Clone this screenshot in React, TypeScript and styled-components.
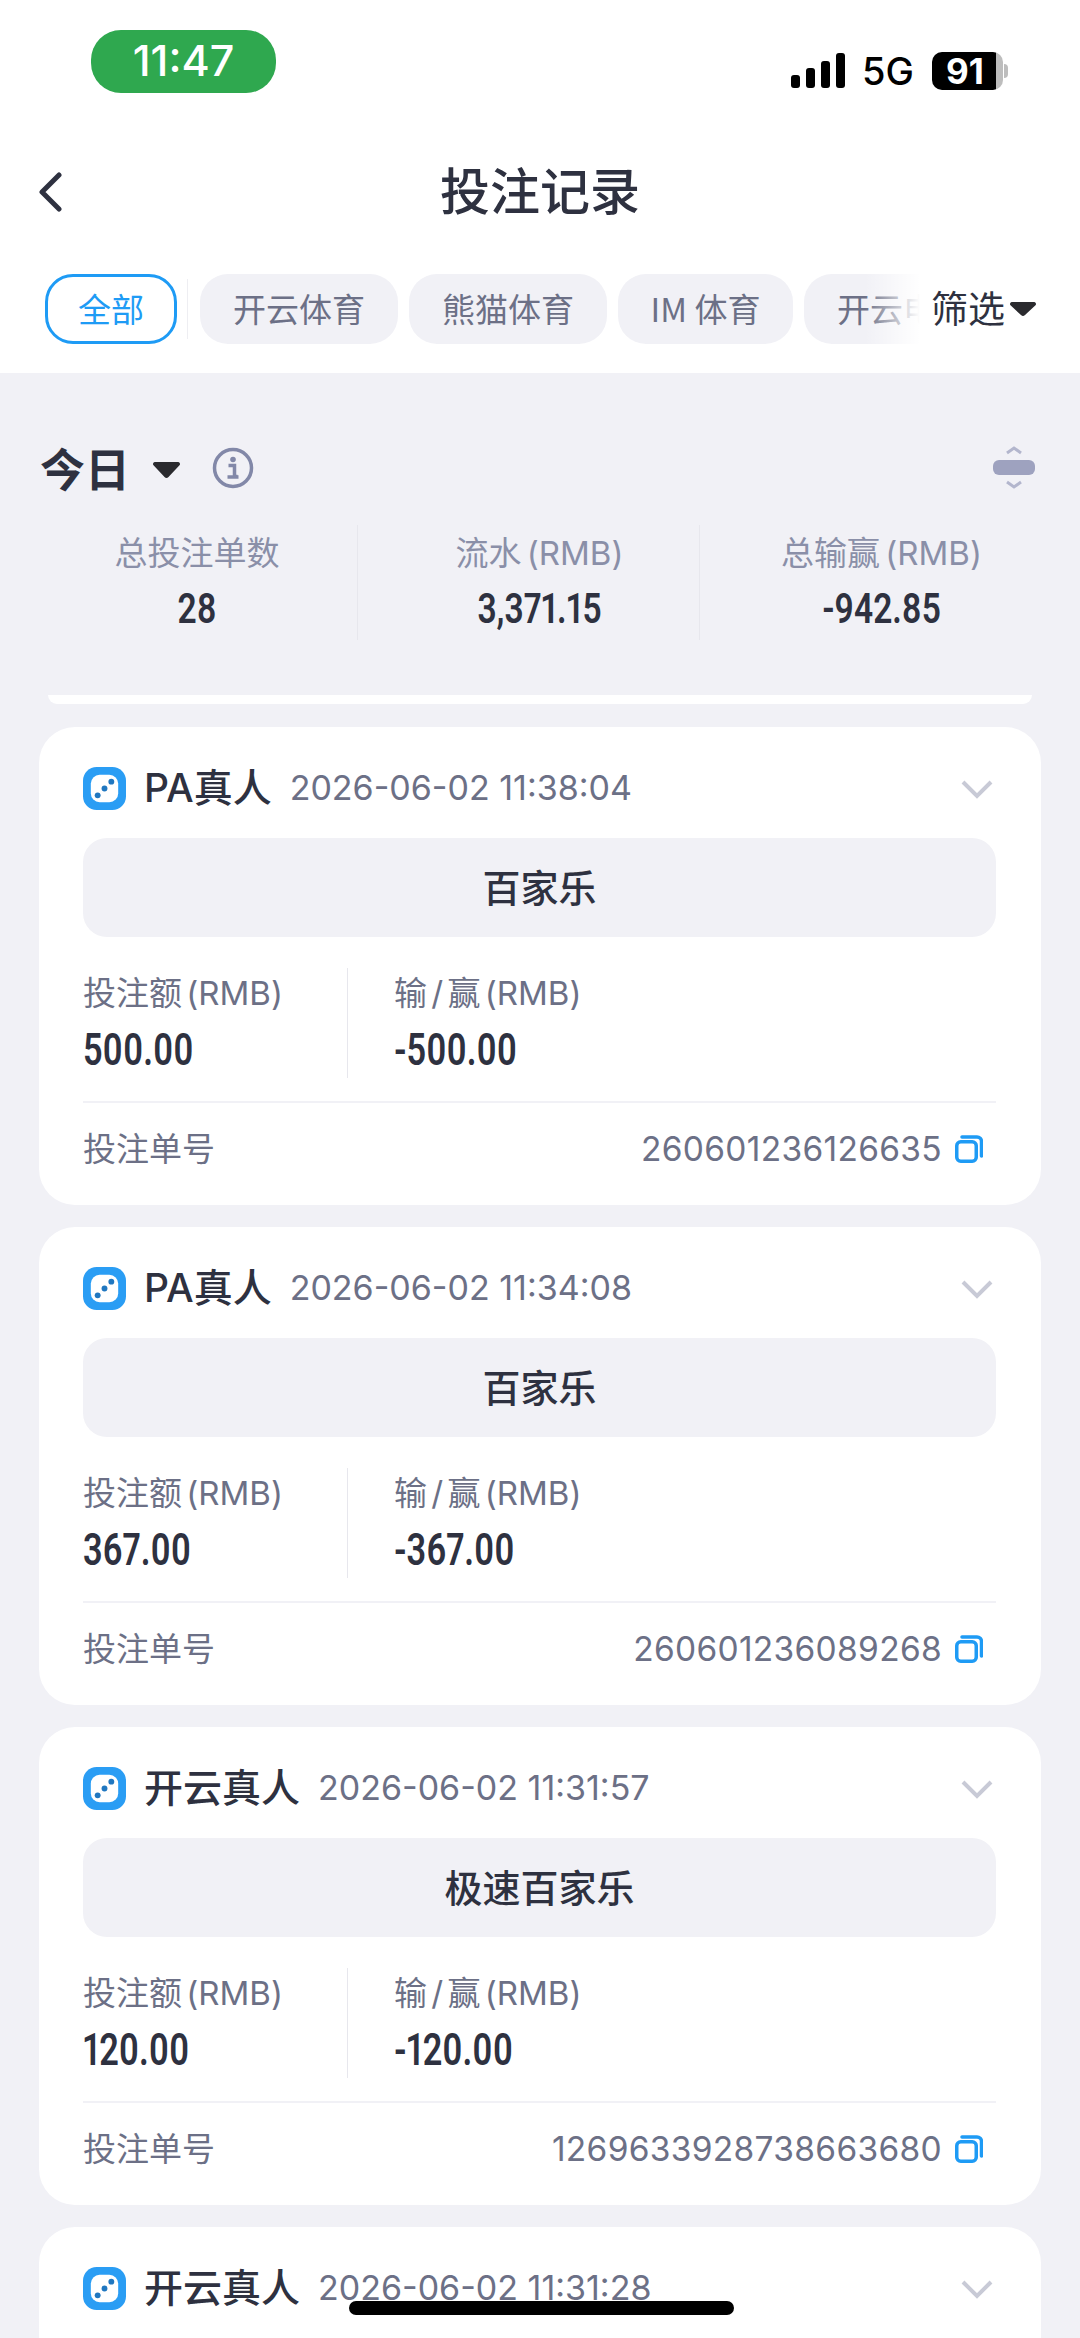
import React from 'react';
import styled, { createGlobalStyle } from 'styled-components';

const GlobalStyle = createGlobalStyle`
  html, body { margin: 0; padding: 0; background: #f1f1f6; }
  * { box-sizing: border-box; }
  body { font-family: Inter, "Noto Sans CJK SC", sans-serif; color: #2e3140; }
`;

const Page = styled.div`
  position: relative;
  width: 1080px;
  height: 2338px;
  overflow: hidden;
  background: #f1f1f6;
`;

const Header = styled.header`
  background: #fff;
  height: 373px;
`;

const StatusBar = styled.div`
  height: 120px;
  padding: 30px 72px 0 91px;
  display: flex;
  justify-content: space-between;
  align-items: flex-start;
`;

const TimePill = styled.div`
  width: 185px;
  height: 63px;
  border-radius: 30px;
  background: #2fa84f;
  color: #fff;
  font: 500 43px/61px Inter, sans-serif;
  text-align: center;
`;

const StatusRight = styled.div`
  display: flex;
  align-items: center;
  margin-top: 22px;
  height: 38px;
`;

const NetLabel = styled.span`
  font: 500 38px/38px Inter, sans-serif;
  color: #000;
  margin: 0 18px 0 15px;
`;

const Battery = styled.div`
  width: 71px;
  height: 38px;
  border-radius: 10px;
  background: linear-gradient(90deg, #000 90%, #bdbdbd 90%);
  color: #fff;
  font: 700 35px/38px Inter, sans-serif;
  text-align: center;
  padding-right: 5px;
`;

const BatteryCap = styled.div`
  width: 4px;
  height: 14px;
  margin-left: 1px;
  border-radius: 0 4px 4px 0;
  background: #bdbdbd;
`;

const NavBar = styled.div`
  position: relative;
  height: 144px;
  padding-bottom: 8px;
  display: flex;
  align-items: center;
  justify-content: center;
`;

const BackButton = styled.button`
  position: absolute;
  left: 37px;
  top: 50%;
  transform: translateY(-50%);
  border: 0;
  padding: 0;
  background: none;
  display: flex;
`;

const Title = styled.h1`
  margin: 0;
  font: 500 50px/64px "Noto Sans CJK SC", sans-serif;
  color: #2e3140;
`;

const TabsRow = styled.div`
  position: relative;
  margin-top: 10px;
  height: 70px;
  padding-left: 45px;
  display: flex;
  align-items: center;
  overflow: hidden;
`;

const Tab = styled.div<{ $active?: boolean; $w: number }>`
  flex: none;
  width: ${p => p.$w}px;
  height: 70px;
  margin-right: ${p => (p.$active ? 13 : 11)}px;
  padding-bottom: 3px;
  border-radius: 28px;
  display: flex;
  align-items: center;
  justify-content: center;
  white-space: nowrap;
  overflow: hidden;
  font: 400 33px/64px "Noto Sans CJK SC", sans-serif;
  background: ${p => (p.$active ? '#fff' : '#f1f1f6')};
  color: ${p => (p.$active ? '#1e9bf5' : '#6c7086')};
  border: ${p => (p.$active ? '3px solid #1e9bf5' : '0')};
`;

const TabDivider = styled.div`
  flex: none;
  width: 1px;
  height: 60px;
  margin: 0 12px 0 -3px;
  background: #eeeef2;
`;

const FilterOverlay = styled.div`
  position: absolute;
  top: 0;
  right: 0;
  width: 215px;
  height: 70px;
  padding: 0 0 4px 66px;
  display: flex;
  align-items: center;
  background: linear-gradient(90deg, rgba(255, 255, 255, 0) 0, #fff 55px);
  font: 400 37px/66px "Noto Sans CJK SC", sans-serif;
  color: #2e3140;
`;

const FilterCaret = styled.svg`
  margin: 4px 0 0 5px;
`;

const SummaryHead = styled.div`
  margin-top: 65px;
  height: 60px;
  padding: 0 45px 0 40px;
  display: flex;
  align-items: center;
`;

const PeriodLabel = styled.div`
  font: 700 45px/60px "Noto Sans CJK SC", sans-serif;
  color: #2e3140;
`;

const PeriodCaret = styled.svg`
  margin: 4px 32px 0 23px;
`;

const Expand = styled.svg`
  margin-left: auto;
`;

const SummaryStats = styled.div`
  margin: 27px 39px 0 15px;
  height: 115px;
  display: grid;
  grid-template-columns: repeat(3, 1fr);
`;

const SummaryCell = styled.div<{ $line?: boolean }>`
  padding-left: 22px;
  text-align: center;
  border-left: ${p => (p.$line ? '1px solid #e7e7ed' : '0')};
`;

const SummaryLabel = styled.div`
  font: 400 33px/50px Inter, "Noto Sans CJK SC", sans-serif;
  word-spacing: -4px;
  color: #8a8fa8;
  margin-top: 3px;
`;

const SummaryValue = styled.div`
  margin-top: 3px;
  font: 600 43px/54px Roboto, sans-serif;
  font-variant-numeric: proportional-nums;
  color: #2e3140;
  transform: scaleX(0.78);
`;

const StubCard = styled.div`
  margin: 55px 48px 0;
  height: 9px;
  background: #fff;
  border-radius: 0 0 16px 16px;
`;

const List = styled.div`
  margin-top: 23px;
  padding: 0 39px;
  display: flex;
  flex-direction: column;
  gap: 22px;
`;

const Card = styled.article`
  flex: none;
  height: 478px;
  border-radius: 36px;
  background: #fff;
  padding: 28px 45px 13px 44px;
`;

const CardHead = styled.div`
  height: 66px;
  display: flex;
  align-items: center;
`;

const VenueName = styled.span`
  margin-left: 18px;
  font: 500 39px/66px Inter, "Noto Sans CJK SC", sans-serif;
  color: #2e3140;
`;

const BetTime = styled.span`
  margin-left: 18px;
  font: 400 34px/66px Inter, sans-serif;
  color: #6c7086;
`;

const Chevron = styled.svg`
  margin: 2px 3px 0 auto;
`;

const GameBox = styled.div`
  margin-top: 17px;
  height: 99px;
  border-radius: 24px;
  background: #f1f1f6;
  text-align: center;
  font: 500 38px/96px "Noto Sans CJK SC", sans-serif;
  color: #2e3140;
`;

const AmountRow = styled.div`
  margin-top: 31px;
  height: 110px;
  display: flex;
`;

const Amount = styled.div<{ $first?: boolean }>`
  width: ${p => (p.$first ? '265px' : 'auto')};
  padding-left: ${p => (p.$first ? '0' : '46px')};
  border-right: ${p => (p.$first ? '1px solid #e7e7ed' : '0')};
`;

const AmountLabel = styled.div`
  font: 400 33px/50px Inter, "Noto Sans CJK SC", sans-serif;
  word-spacing: -5px;
  color: #6c7086;
`;

const AmountValue = styled.div`
  margin-top: 7px;
  font: 600 44px/50px Roboto, sans-serif;
  font-variant-numeric: proportional-nums;
  color: #2e3140;
  transform: scaleX(0.78);
  transform-origin: left center;
`;

const CardFoot = styled.div`
  margin-top: 23px;
  height: 91px;
  padding-top: 2px;
  border-top: 2px solid #f1f1f6;
  display: flex;
  align-items: center;
  justify-content: space-between;
  font: 400 33px/88px Inter, "Noto Sans CJK SC", sans-serif;
  color: #6c7086;
`;

const OrderNo = styled.div`
  display: flex;
  align-items: center;
  gap: 13px;
  padding-right: 13px;
  font-size: 33.500px;
  letter-spacing: 0.3px;
`;

const HomeBar = styled.div`
  position: absolute;
  left: 349px;
  top: 2301px;
  width: 385px;
  height: 14px;
  border-radius: 7px;
  background: #000;
`;

const DiceIcon = () => (
  <svg width="43" height="43" viewBox="0 0 44 44" style={{ flex: 'none' }}>
    <rect x="0" y="0" width="44" height="44" rx="14" fill="#2a9df4" />
    <rect x="8" y="8" width="28" height="28" rx="9" fill="#fff" />
    <circle cx="15" cy="29" r="3" fill="#2077c0" />
    <circle cx="22" cy="22" r="3" fill="#2077c0" />
    <circle cx="29" cy="15" r="3" fill="#2077c0" />
  </svg>
);

const CopyIcon = () => (
  <svg width="28" height="28" viewBox="0 0 28 28" fill="none" stroke="#1e9bf5" strokeWidth="3.500">
    <rect x="1.750" y="6.750" width="19.500" height="19.500" rx="4" />
    <path d="M7 2h15a4.500 4.500 0 0 1 4.500 4.500V21" strokeLinecap="round" />
  </svg>
);

const SignalIcon = () => (
  <svg width="56" height="36" viewBox="0 0 56 36" fill="#000">
    <rect x="0" y="22" width="9" height="13" rx="3" />
    <rect x="15" y="15" width="9" height="20" rx="3" />
    <rect x="30" y="8" width="9" height="27" rx="3" />
    <rect x="45" y="0" width="9" height="35" rx="3" />
  </svg>
);

type Bet = { venue: string; time: string; game: string; stake: string; result: string; order: string };

const bets: Bet[] = [
  { venue: 'PA真人', time: '2026-06-02 11:38:04', game: '百家乐', stake: '500.00', result: '-500.00', order: '260601236126635' },
  { venue: 'PA真人', time: '2026-06-02 11:34:08', game: '百家乐', stake: '367.00', result: '-367.00', order: '260601236089268' },
  { venue: '开云真人', time: '2026-06-02 11:31:57', game: '极速百家乐', stake: '120.00', result: '-120.00', order: '1269633928738663680' },
  { venue: '开云真人', time: '2026-06-02 11:31:28', game: '极速百家乐', stake: '100.00', result: '-100.00', order: '1269633928738663679' },
];

const BetCard = ({ bet }: { bet: Bet }) => (
  <Card>
    <CardHead>
      <DiceIcon />
      <VenueName>{bet.venue}</VenueName>
      <BetTime>{bet.time}</BetTime>
      <Chevron width="32" height="20" viewBox="0 0 32 20" fill="none" stroke="#c8cad6" strokeWidth="4">
        <path d="M2 3l14 14L30 3" />
      </Chevron>
    </CardHead>
    <GameBox>{bet.game}</GameBox>
    <AmountRow>
      <Amount $first>
        <AmountLabel>投注额 (RMB)</AmountLabel>
        <AmountValue>{bet.stake}</AmountValue>
      </Amount>
      <Amount>
        <AmountLabel>输 / 赢 (RMB)</AmountLabel>
        <AmountValue>{bet.result}</AmountValue>
      </Amount>
    </AmountRow>
    <CardFoot>
      <span>投注单号</span>
      <OrderNo>
        {bet.order}
        <CopyIcon />
      </OrderNo>
    </CardFoot>
  </Card>
);

const App = () => (
  <Page>
    <GlobalStyle />
    <Header>
      <StatusBar>
        <TimePill>11:47</TimePill>
        <StatusRight>
          <SignalIcon />
          <NetLabel>5G</NetLabel>
          <Battery>91</Battery>
          <BatteryCap />
        </StatusRight>
      </StatusBar>
      <NavBar>
        <BackButton>
          <svg width="26" height="40" viewBox="0 0 26 40" fill="none" stroke="#2e3140" strokeWidth="5" strokeLinecap="round" strokeLinejoin="round">
            <path d="M22 3L5 20l17 17" />
          </svg>
        </BackButton>
        <Title>投注记录</Title>
      </NavBar>
      <TabsRow>
        <Tab $active $w={132}>全部</Tab>
        <TabDivider />
        <Tab $w={198}>开云体育</Tab>
        <Tab $w={198}>熊猫体育</Tab>
        <Tab $w={175}>IM 体育</Tab>
        <Tab $w={198}>开云电竞</Tab>
        <FilterOverlay>
          筛选
          <FilterCaret width="26" height="14" viewBox="0 0 26 14" fill="#2a2a2e">
            <path d="M2 0h22a2 2 0 0 1 1.500 3.300L15 13a3 3 0 0 1-4 0L.5 3.300A2 2 0 0 1 2 0z" />
          </FilterCaret>
        </FilterOverlay>
      </TabsRow>
    </Header>

    <SummaryHead>
      <PeriodLabel>今日</PeriodLabel>
      <PeriodCaret width="27" height="16" viewBox="0 0 27 16" fill="#2a2a2e">
        <path d="M2 0h23a2 2 0 0 1 1.500 3.300L15.500 15a3 3 0 0 1-4 0L.5 3.300A2 2 0 0 1 2 0z" />
      </PeriodCaret>
      <svg width="42" height="42" viewBox="0 0 42 42" fill="none">
        <circle cx="21" cy="21" r="18.500" stroke="#8288a8" strokeWidth="3.500" />
        <circle cx="21" cy="12.500" r="2.800" fill="#8288a8" />
        <path d="M16.500 18.500h6v11h3M15.500 30h11" stroke="#8288a8" strokeWidth="3.500" />
      </svg>
      <Expand width="42" height="46" viewBox="0 0 42 46" fill="none">
        <rect x="0" y="15" width="42" height="15" rx="6" fill="#9ea2bf" />
        <path d="M14 8l7-5 7 5M14 37l7 5 7-5" stroke="#b3b6cd" strokeWidth="3" />
      </Expand>
    </SummaryHead>

    <SummaryStats>
      <SummaryCell>
        <SummaryLabel>总投注单数</SummaryLabel>
        <SummaryValue>28</SummaryValue>
      </SummaryCell>
      <SummaryCell $line>
        <SummaryLabel>流水 (RMB)</SummaryLabel>
        <SummaryValue>3,371.15</SummaryValue>
      </SummaryCell>
      <SummaryCell $line>
        <SummaryLabel>总输赢 (RMB)</SummaryLabel>
        <SummaryValue>-942.85</SummaryValue>
      </SummaryCell>
    </SummaryStats>

    <StubCard />
    <List>
      {bets.map(bet => (
        <BetCard key={bet.order} bet={bet} />
      ))}
    </List>
    <HomeBar />
  </Page>
);

export default App;
